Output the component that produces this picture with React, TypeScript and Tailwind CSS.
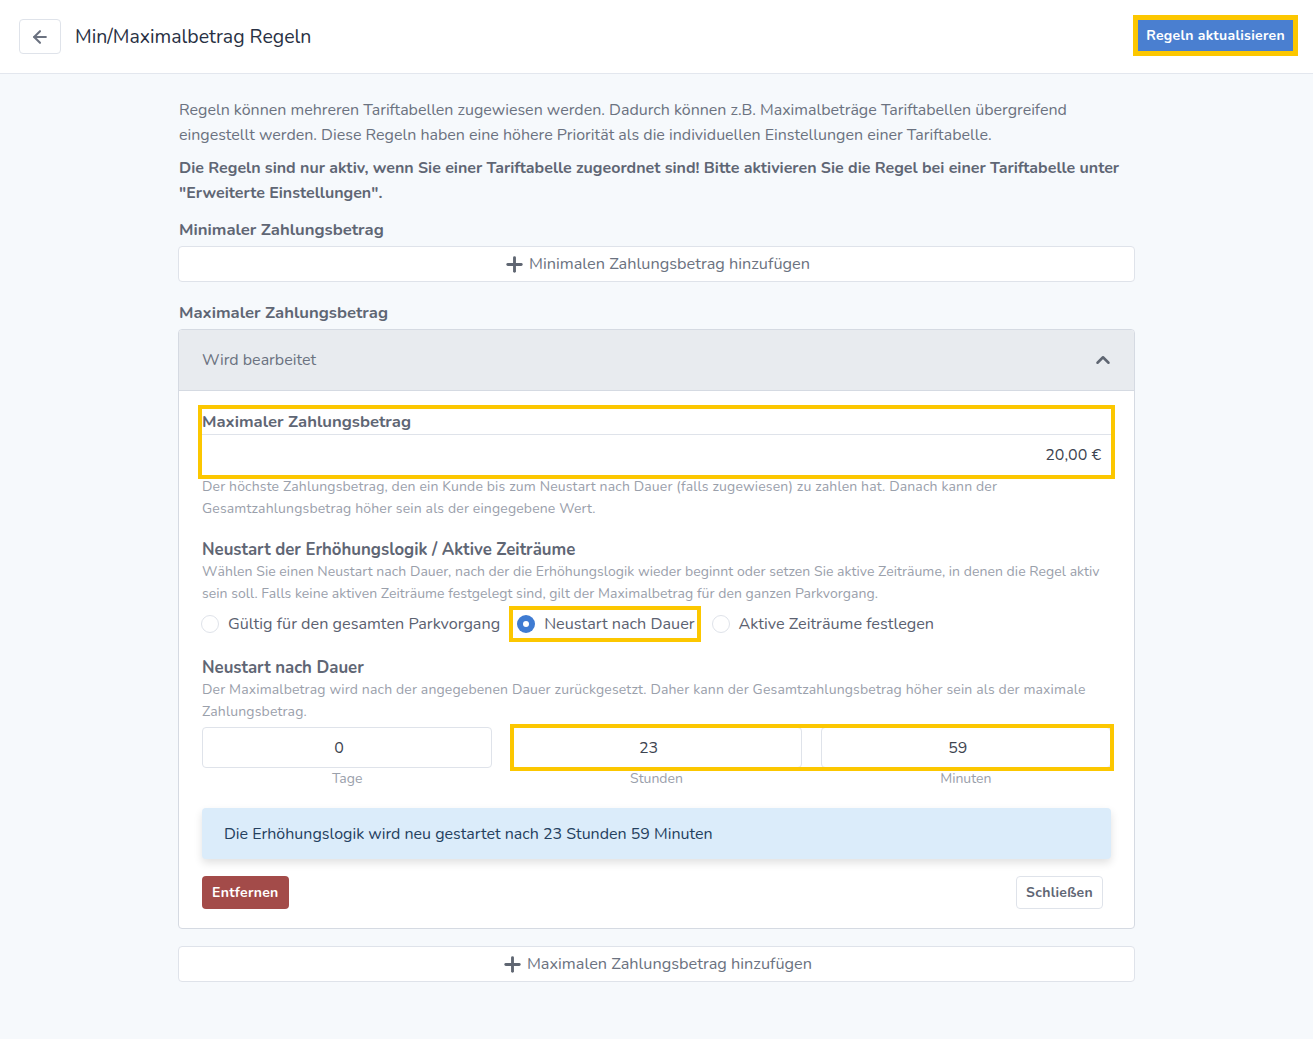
import { ArrowLeft, ChevronUp, Plus } from 'lucide-react'

const font = { fontFamily: '"Nunito", "Lato", "Open Sans", sans-serif' }

function AddRow({ label }: { label: string }) {
  return (
    <div className="h-[36px] bg-white border border-[#dfe3ea] rounded-[4px] flex items-center justify-center gap-[3px] text-[16.3px] text-[#6b7280]">
      <Plus size={23} strokeWidth={3} className="text-[#5f6672]" />
      <span>{label}</span>
    </div>
  )
}

function Radio({ checked, label }: { checked?: boolean; label: string }) {
  return (
    <label className="flex items-center gap-[9px] text-[16.2px] text-[#5b6170]">
      {checked ? (
        <span className="w-[18px] h-[18px] rounded-full bg-[#3f7bd2] flex items-center justify-center">
          <span className="w-[6px] h-[6px] rounded-full bg-white" />
        </span>
      ) : (
        <span className="w-[18px] h-[18px] rounded-full border border-[#dfe3ea] bg-white" />
      )}
      <span>{label}</span>
    </label>
  )
}

function NumField({ value }: { value: string }) {
  return (
    <div className="h-[41px] bg-white border border-[#dfe3ea] rounded-[4px] flex items-center justify-center pr-[16px] text-[16px] text-[#3d4450]">
      {value}
    </div>
  )
}

export default function App() {
  return (
    <div className="min-h-[1039px] bg-[#f6f9fc]" style={font}>
      <header className="h-[74px] bg-white border-b border-[#e3e7ee] flex items-center justify-between pl-[19px] pr-[15px]">
        <div className="flex items-center gap-[14px]">
          <button className="w-[42px] h-[35px] border border-[#dfe3ea] rounded-[4px] flex items-center justify-center text-[#6b7280]">
            <ArrowLeft size={20} strokeWidth={2.5} />
          </button>
          <h1 className="text-[19.5px] text-[#283043]">Min/Maximalbetrag Regeln</h1>
        </div>
        <div className="border-[5px] border-[#fcc700] -mt-[2px]">
          <button className="h-[31px] px-[8px] bg-[#4a7fd0] text-white text-[14px] font-bold tracking-[0.3px]">
            Regeln aktualisieren
          </button>
        </div>
      </header>

      <main className="w-[957px] ml-[178px] pt-[24px]">
        <p className="text-[16px] leading-[25px] text-[#6b7280] pl-[1px]">
          Regeln können mehreren Tariftabellen zugewiesen werden. Dadurch können z.B. Maximalbeträge Tariftabellen übergreifend eingestellt werden. Diese Regeln haben eine höhere Priorität als die individuellen Einstellungen einer Tariftabelle.
        </p>
        <p className="mt-[8px] text-[16px] leading-[25px] font-bold text-[#5f6674] pl-[1px]">
          Die Regeln sind nur aktiv, wenn Sie einer Tariftabelle zugeordnet sind! Bitte aktivieren Sie die Regel bei einer Tariftabelle unter "Erweiterte Einstellungen".
        </p>

        <h2 className="mt-[13px] mb-[5px] text-[16.7px] leading-[22px] font-bold text-[#5f6674] pl-[1px]">Minimaler Zahlungsbetrag</h2>
        <AddRow label="Minimalen Zahlungsbetrag hinzufügen" />

        <h2 className="mt-[20px] mb-[5px] text-[16.7px] leading-[22px] font-bold text-[#5f6674] pl-[1px]">Maximaler Zahlungsbetrag</h2>
        <div className="border border-[#d5dae2] rounded-[4px] bg-white overflow-hidden">
          <div className="h-[61px] bg-[#e8ebef] border-b border-[#d5dae2] flex items-center justify-between pl-[23px] pr-[20px]">
            <span className="text-[16px] text-[#6b7280]">Wird bearbeitet</span>
            <ChevronUp size={22} strokeWidth={2.75} className="text-[#5f6672]" />
          </div>

          <div className="px-[23px] pt-[14px] pb-[19px]">
            <div className="-mx-[4px] border-[4px] border-[#fcc700]">
              <div className="h-[25px] flex items-center text-[16.7px] font-bold text-[#5f6674]">Maximaler Zahlungsbetrag</div>
              <div className="h-[41px] border-t border-[#dfe3ea] flex items-center justify-end pr-[10px] text-[16px] text-[#3d4450]">
                20,00 €
              </div>
            </div>
            <p className="-mt-[3px] text-[14px] leading-[22px] tracking-[0.15px] text-[#9aa0ab]">
              Der höchste Zahlungsbetrag, den ein Kunde bis zum Neustart nach Dauer (falls zugewiesen) zu zahlen hat. Danach kann der Gesamtzahlungsbetrag höher sein als der eingegebene Wert.
            </p>

            <h3 className="mt-[19px] text-[16.8px] leading-[22px] font-bold text-[#5f6674]">Neustart der Erhöhungslogik / Aktive Zeiträume</h3>
            <p className="text-[14px] leading-[22px] tracking-[0.05px] text-[#9aa0ab]">
              Wählen Sie einen Neustart nach Dauer, nach der die Erhöhungslogik wieder beginnt oder setzen Sie aktive Zeiträume, in denen die Regel aktiv sein soll. Falls keine aktiven Zeiträume festgelegt sind, gilt der Maximalbetrag für den ganzen Parkvorgang.
            </p>
            <div className="mt-[1px] flex items-center">
              <div className="-ml-[1px]">
                <Radio label="Gültig für den gesamten Parkvorgang" />
              </div>
              <div className="ml-[9px] h-[36px] border-[4px] border-[#fcc700] flex items-center pl-[4px] pr-[2px]">
                <Radio checked label="Neustart nach Dauer" />
              </div>
              <div className="ml-[11px]">
                <Radio label="Aktive Zeiträume festlegen" />
              </div>
            </div>

            <h3 className="mt-[15px] text-[16.8px] leading-[22px] font-bold text-[#5f6674]">Neustart nach Dauer</h3>
            <p className="text-[14px] leading-[22px] tracking-[0.15px] text-[#9aa0ab]">
              Der Maximalbetrag wird nach der angegebenen Dauer zurückgesetzt. Daher kann der Gesamtzahlungsbetrag höher sein als der maximale Zahlungsbetrag.
            </p>

            <div className="mt-[4px] grid grid-cols-3 gap-[19px] relative">
              <div className="flex flex-col items-center">
                <div className="w-full"><NumField value="0" /></div>
                <span className="mt-[1px] text-[14px] leading-[20px] text-[#9aa0ab]">Tage</span>
              </div>
              <div className="flex flex-col items-center">
                <div className="w-full"><NumField value="23" /></div>
                <span className="mt-[1px] text-[14px] leading-[20px] text-[#9aa0ab]">Stunden</span>
              </div>
              <div className="flex flex-col items-center">
                <div className="w-full"><NumField value="59" /></div>
                <span className="mt-[1px] text-[14px] leading-[20px] text-[#9aa0ab]">Minuten</span>
              </div>
              <div className="absolute left-[308px] right-[-3px] top-[-3px] h-[47px] border-[4px] border-[#fcc700] pointer-events-none" />
            </div>

            <div className="mt-[19px] h-[51px] bg-[#dbecfa] rounded-[4px] shadow-[0_4px_8px_rgba(0,0,0,0.12)] flex items-center pl-[22px] text-[16px] text-[#24405e]">
              Die Erhöhungslogik wird neu gestartet nach 23 Stunden 59 Minuten
            </div>

            <div className="mt-[17px] flex items-center justify-between">
              <button className="h-[33px] px-[10px] bg-[#a34b49] rounded-[4px] text-white text-[14px] font-bold tracking-[0.3px]">Entfernen</button>
              <button className="mr-[8px] h-[33px] px-[9px] bg-white border border-[#dfe3ea] rounded-[4px] text-[#5f6674] text-[14px] font-bold tracking-[0.3px]">Schließen</button>
            </div>
          </div>
        </div>

        <div className="mt-[17px]">
          <AddRow label="Maximalen Zahlungsbetrag hinzufügen" />
        </div>
      </main>
    </div>
  )
}
